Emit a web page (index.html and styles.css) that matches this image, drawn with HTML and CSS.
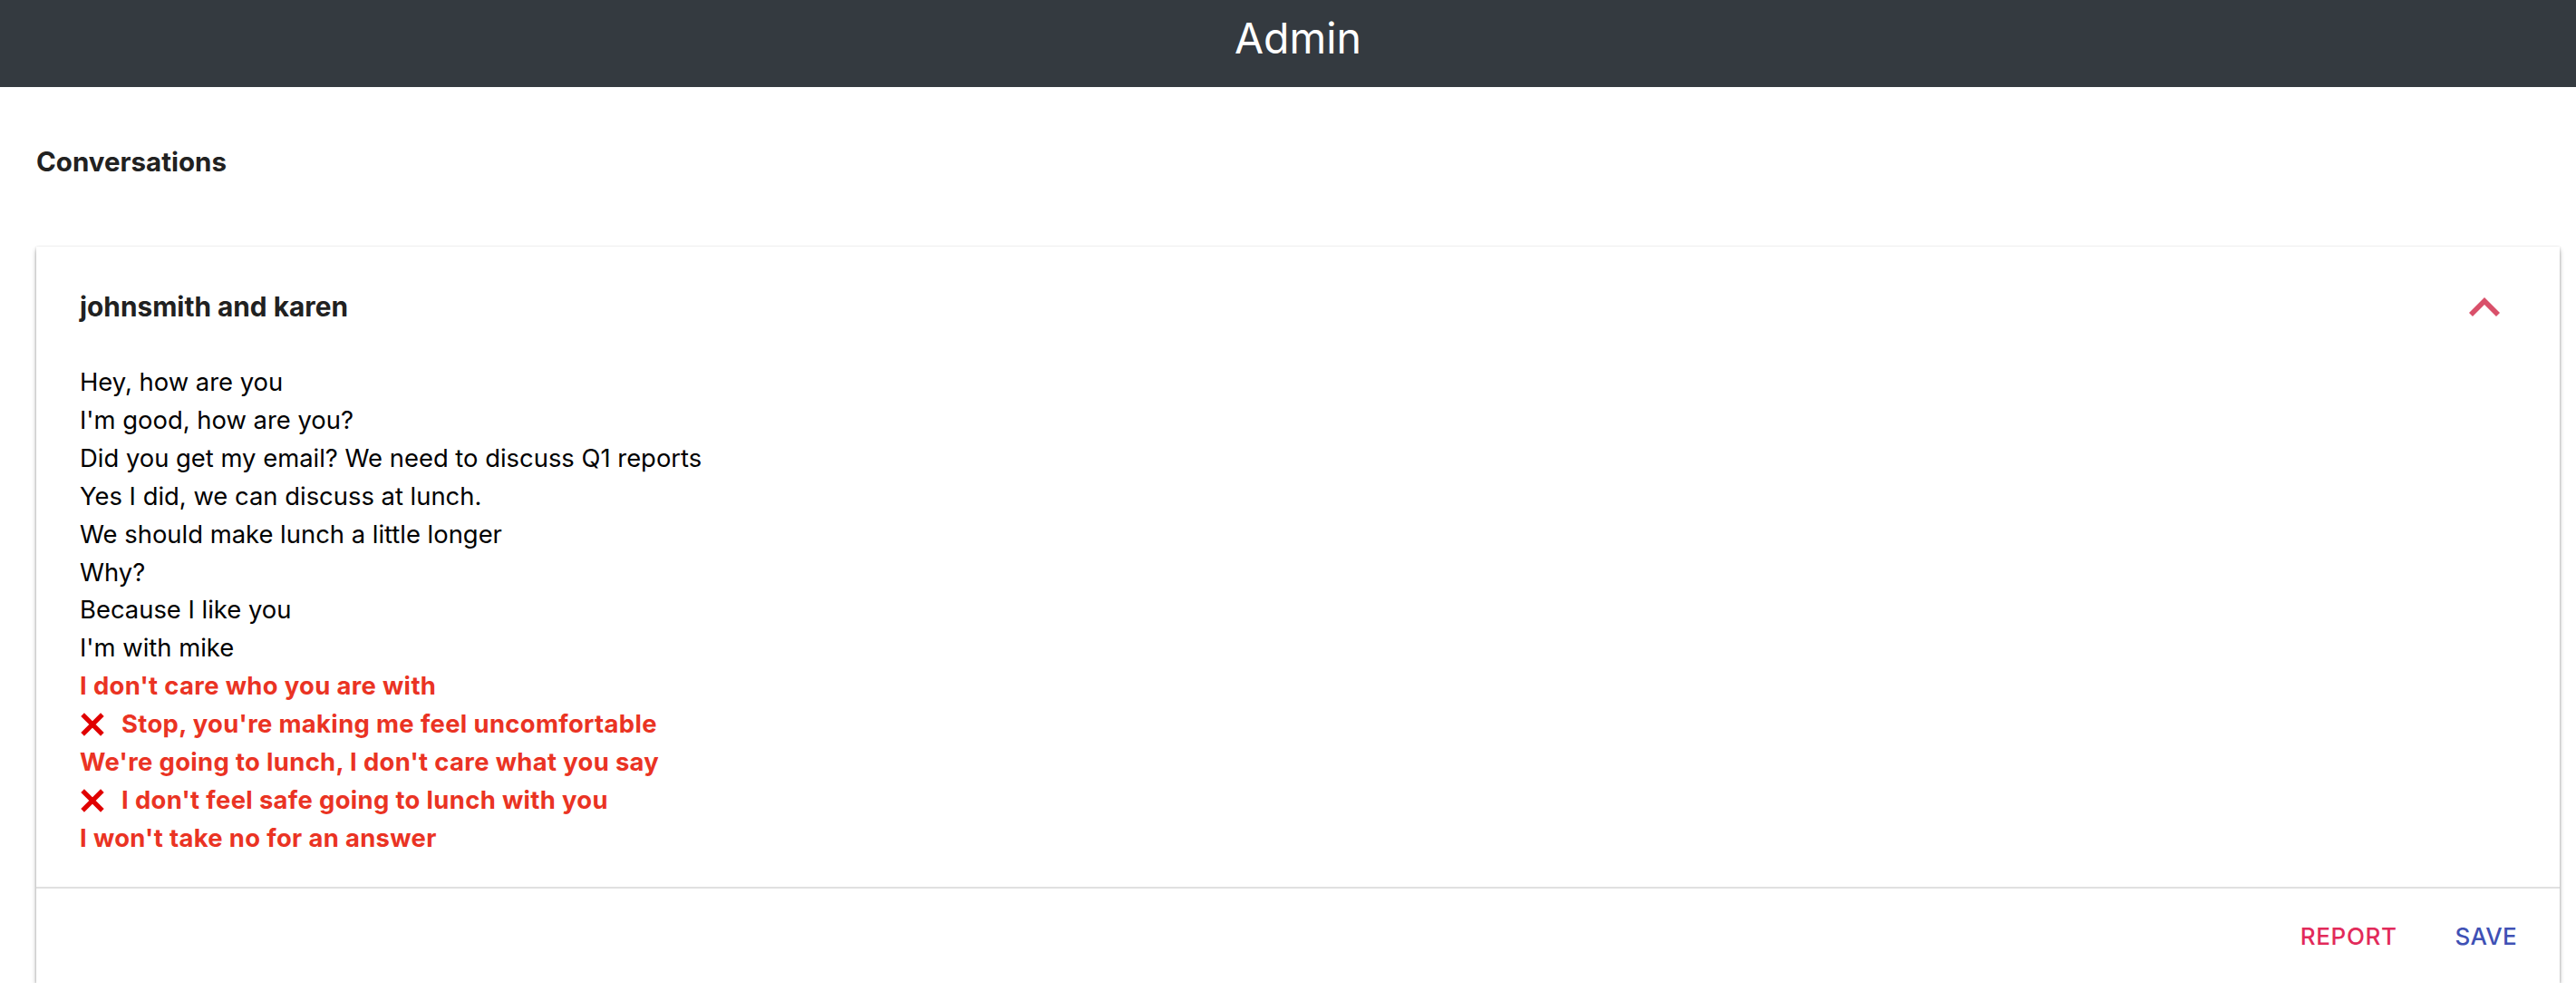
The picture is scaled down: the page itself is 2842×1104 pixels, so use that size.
FILE: index.html
```html
<!DOCTYPE html>
<html lang="en">
<head>
<meta charset="utf-8">
<title>Admin</title>
<link rel="stylesheet" href="styles.css">
</head>
<body>
<header class="topbar">Admin</header>
<main class="content">
  <h2 class="section-title">Conversations</h2>
  <section class="panel">
    <div class="panel-summary">
      <div class="panel-title">johnsmith and karen</div>
      <svg class="chevron" viewBox="6 8 12 7.41" width="34" height="21" aria-hidden="true"><path d="M12 8l-6 6 1.41 1.41L12 10.83l4.59 4.58L18 14z"/></svg>
    </div>
    <div class="panel-body">
      <div class="msg">Hey, how are you</div>
      <div class="msg">I'm good, how are you?</div>
      <div class="msg">Did you get my email? We need to discuss Q1 reports</div>
      <div class="msg">Yes I did, we can discuss at lunch.</div>
      <div class="msg">We should make lunch a little longer</div>
      <div class="msg">Why?</div>
      <div class="msg">Because I like you</div>
      <div class="msg">I'm with mike</div>
      <div class="msg flagged">I don't care who you are with</div>
      <div class="msg flagged"><svg class="xmark" viewBox="0 0 27 27" width="28" height="28" aria-hidden="true"><path d="M3 3L24 24M24 3L3 24"/></svg>Stop, you're making me feel uncomfortable</div>
      <div class="msg flagged">We're going to lunch, I don't care what you say</div>
      <div class="msg flagged"><svg class="xmark" viewBox="0 0 27 27" width="28" height="28" aria-hidden="true"><path d="M3 3L24 24M24 3L3 24"/></svg>I don't feel safe going to lunch with you</div>
      <div class="msg flagged">I won't take no for an answer</div>
    </div>
    <div class="panel-actions">
      <button class="btn btn-report">Report</button>
      <button class="btn btn-save">Save</button>
    </div>
  </section>
</main>
</body>
</html>
```
FILE: styles.css
```css
html, body {
  margin: 0;
  padding: 0;
  background: #ffffff;
}
body {
  font-family: Inter, "Noto Sans", "Liberation Sans", sans-serif;
  color: #000;
}
.topbar {
  height: 96px;
  background: #343a40;
  color: #ffffff;
  font-size: 46.5px;
  font-weight: 400;
  display: flex;
  align-items: center;
  justify-content: center;
  padding: 0 0 12px 22px;
  box-sizing: border-box;
}
.content {
  padding: 0 18px 0 40px;
}
.section-title {
  margin: 64px 0 76px;
  font-size: 29.5px;
  line-height: 36px;
  font-weight: 700;
  color: #212121;
}
.panel {
  background: #fff;
  box-shadow: 0 4px 5px rgba(0,0,0,0.3), 0 1px 3px rgba(0,0,0,0.14), 0 0 2px rgba(0,0,0,0.08);
}
.panel-summary {
  display: flex;
  align-items: center;
  justify-content: space-between;
  padding: 46px 66px 43px 48px;
}
.panel-title {
  font-size: 29.8px;
  line-height: 40px;
  font-weight: 700;
  color: #212121;
}
.chevron {
  fill: #d9506a;
  display: block;
}
.panel-body {
  padding: 0 48px 32px;
}
.msg {
  font-size: 27.4px;
  line-height: 41.9px;
  display: flex;
  align-items: center;
}
.msg.flagged {
  color: #ea3323;
  font-weight: 700;
  letter-spacing: 0.35px;
}
.xmark {
  stroke: #e00000;
  stroke-width: 5;
  fill: none;
  margin-right: 18px;
  flex: none;
}
.panel-actions {
  border-top: 2px solid #e0e0e0;
  height: 106px;
  display: flex;
  align-items: center;
  justify-content: flex-end;
  padding: 2px 47px 0 0;
  box-sizing: border-box;
  gap: 64px;
}
.btn {
  background: none;
  border: none;
  padding: 0;
  font-family: inherit;
  font-size: 26px;
  font-weight: 500;
  letter-spacing: 0.01em;
  text-transform: uppercase;
  cursor: pointer;
}
.btn-report { color: #e22a5a; letter-spacing: 0.025em; }
.btn-save { color: #3f51b5; }
```
